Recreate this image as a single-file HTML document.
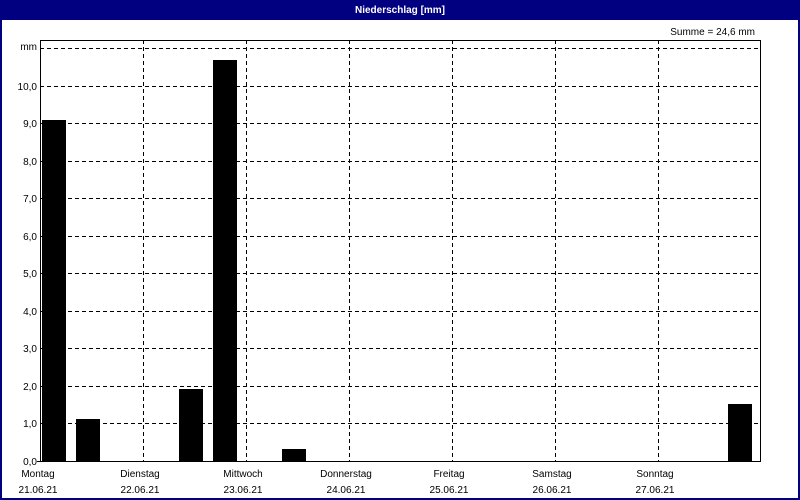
<!DOCTYPE html>
<html><head><meta charset="utf-8"><style>
html,body{margin:0;padding:0;background:#fff}
svg{display:block}
text{font-family:"Liberation Sans",sans-serif;font-size:10px;fill:#000}
</style></head><body>
<svg width="800" height="500" viewBox="0 0 800 500">
<rect x="0" y="0" width="800" height="500" fill="#000080"/>
<rect x="2" y="20" width="796" height="478" fill="#fff"/>
<text x="400" y="13" text-anchor="middle" style="fill:#fff;font-weight:bold">Niederschlag [mm]</text>
<text x="755" y="35" text-anchor="end">Summe = 24,6 mm</text>
<g stroke="#000" stroke-width="1" stroke-dasharray="4,3" fill="none">
<path d="M40 48.5H760M40 86.5H760M40 123.5H760M40 161.5H760M40 198.5H760M40 236.5H760M40 273.5H760M40 311.5H760M40 348.5H760M40 386.5H760M40 423.5H760"/>
<path d="M143.5 40V461M246.5 40V461M349.5 40V461M452.5 40V461M555.5 40V461M658.5 40V461"/>
</g>
<path d="M40.5 40V461.5H760.5V40M40.5 40.5H760.5M37 461.5H41" stroke="#000" stroke-width="1" fill="none"/>
<g fill="#000">
<rect x="42" y="120" width="24" height="341"/>
<rect x="76" y="419" width="24" height="42"/>
<rect x="179" y="389" width="24" height="72"/>
<rect x="213" y="60" width="24" height="401"/>
<rect x="282" y="449" width="24" height="12"/>
<rect x="728" y="404" width="24" height="57"/>
</g>
<g text-anchor="end">
<text x="37" y="50">mm</text>
<text x="37" y="90">10,0</text>
<text x="37" y="127">9,0</text>
<text x="37" y="165">8,0</text>
<text x="37" y="202">7,0</text>
<text x="37" y="240">6,0</text>
<text x="37" y="277">5,0</text>
<text x="37" y="315">4,0</text>
<text x="37" y="352">3,0</text>
<text x="37" y="390">2,0</text>
<text x="37" y="427">1,0</text>
<text x="37" y="465">0,0</text>
</g>
<g text-anchor="middle">
<text x="38" y="477">Montag</text><text x="38" y="493">21.06.21</text>
<text x="140" y="477">Dienstag</text><text x="140" y="493">22.06.21</text>
<text x="243" y="477">Mittwoch</text><text x="243" y="493">23.06.21</text>
<text x="346" y="477">Donnerstag</text><text x="346" y="493">24.06.21</text>
<text x="449" y="477">Freitag</text><text x="449" y="493">25.06.21</text>
<text x="552" y="477">Samstag</text><text x="552" y="493">26.06.21</text>
<text x="655" y="477">Sonntag</text><text x="655" y="493">27.06.21</text>
</g>
</svg>
</body></html>
